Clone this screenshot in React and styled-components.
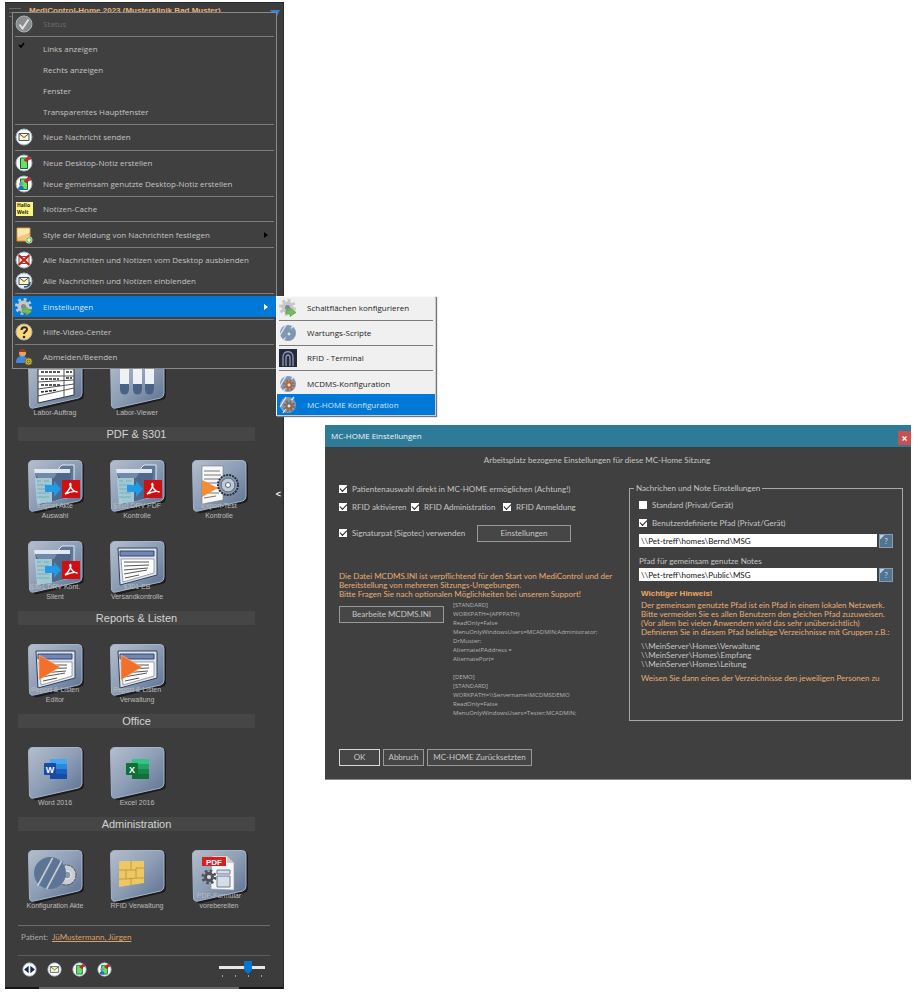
import React from "react";
import styled, { createGlobalStyle, css } from "styled-components";

const menuFont = `"Open Sans", "Noto Sans", sans-serif`;
const winFont = `Lato, "Liberation Sans", sans-serif`;
const arial = `"Liberation Sans", sans-serif`;

const GlobalStyle = createGlobalStyle`
    * { box-sizing: border-box; }
    body { margin: 0; background: #fff; font-family: ${arial}; }
    button, input { font: inherit; margin: 0; padding: 0; }
    ul, p, h1, h2, h3, pre { margin: 0; padding: 0; }
    ul { list-style: none; }
    svg { display: block; flex: none; }
`;

const Desktop = styled.div`
    display: flex;
    align-items: flex-start;
    gap: 41px;
    padding: 2px 7px 8px 5px;
`;

/* ---------- side bar ---------- */

const Sidebar = styled.aside`
    position: relative;
    flex: none;
    width: 279px;
    background: #3c3c3c;
    border-right: 1px solid #2a2a2a;
    border-top: 1px solid #2a2a2a;
`;

const TitleBar = styled.header`
    display: flex;
    align-items: flex-start;
    gap: 8px;
    height: 24px;
    padding: 3px 3px 0 4px;
`;

const Title = styled.h1`
    flex: 1;
    font: bold 8px/10px ${arial};
    color: #e8b27a;
    white-space: nowrap;
`;

const Burger = styled.button`
    width: 12px;
    height: 11px;
    margin-top: 2px;
    border: 0;
    background: repeating-linear-gradient(#666 0 1px, transparent 1px 4px);
`;

const Sections = styled.div`
    display: flex;
    flex-direction: column;
    gap: 9px;
    padding: 0 28px 0 13px;
`;

const FirstRow = styled.div`
    padding-top: 330px;
`;

const Caption = styled.h2`
    height: 14px;
    margin-bottom: 19px;
    background: #464646;
    color: #d4d4d4;
    font: normal 11px/15px ${arial};
    text-align: center;
`;

const TileGrid = styled.div`
    display: grid;
    grid-template-columns: repeat(3, 82px);
    row-gap: 20px;
    margin-left: -4px;
`;

const Tile = styled.button`
    display: flex;
    flex-direction: column;
    align-items: center;
    justify-content: flex-end;
    width: 82px;
    height: 61px;
    border: 0;
    background: none;
    color: #bdbdbd;
    font: 7px/10px ${arial};
`;

const TileArt = styled.span`
    height: 51px;
    margin-left: 4px;
    margin-bottom: ${props => (props.$lines === 2 ? "-10px" : "0")};
`;

const TileLabel = styled.span`
    position: relative;
    white-space: nowrap;
`;

const PatientBar = styled.div`
    display: flex;
    gap: 4px;
    align-items: center;
    height: 31px;
    margin: 14px 13px 0 13px;
    padding: 0 3px 6px;
    border-top: 1px solid #6c6c6c;
    border-bottom: 1px solid #5c5c5c;
    color: #a8a8a8;
    font: 8px/11px ${winFont};

    a { color: #dca268; }
`;

const BottomBar = styled.div`
    display: flex;
    align-items: center;
    gap: 10px;
    height: 31px;
    padding: 0 18px 5px 17px;
`;

const RoundButton = styled.button`
    width: 15px;
    height: 15px;
    border: 0;
    background: none;
`;

const ZoomBox = styled.label`
    display: flex;
    flex-direction: column;
    width: 46px;
    margin-left: auto;
`;

const Range = styled.input`
    appearance: none;
    width: 46px;
    height: 13px;
    background: linear-gradient(#e8e8e8, #e8e8e8) center / 100% 3px no-repeat;

    &::-webkit-slider-thumb {
        appearance: none;
        width: 8px;
        height: 13px;
        background: #0078d7;
        clip-path: polygon(0 0, 100% 0, 100% 70%, 50% 100%, 0 70%);
    }
`;

const Ticks = styled.span`
    display: flex;
    justify-content: space-between;
    padding: 1px 3px 0;

    i { width: 1px; height: 2px; background: #a0a0a0; }
`;

const Grip = styled.div`
    height: 2px;
    border: solid #151515;
    border-width: 0 44px 0 34px;
    background: #666;
`;

const Collapse = styled.button`
    position: absolute;
    top: 485px;
    right: 0;
    width: 9px;
    border: 0;
    background: none;
    color: #f0f0f0;
    font: bold 9px/12px ${arial};
`;

/* ---------- menus ---------- */

const MenuList = styled.ul`
    position: absolute;
    z-index: 2;
    display: flex;
    flex-direction: column;
    font: 8px/12px ${menuFont};

    ${props => props.$sub ? css`
        top: 0;
        left: 263px;
        width: 160px;
        height: 120px;
        background: #f0f0f0;
        border: 1px solid #fafafa;
        border-right-color: #ccc;
        border-bottom-color: #ccc;
        box-shadow: 1px 1px 1px #777;
        color: #1c1c1c;
    ` : css`
        top: 9px;
        left: 7px;
        width: 265px;
        height: 357px;
        background: #404040;
        border: 1px solid #8a8a8a;
        color: #c4c4c4;
    `}
`;

const MenuRow = styled.li`
    position: relative;
    flex: none;
    height: 21px;
`;

const MenuButton = styled.button`
    display: grid;
    grid-template-columns: 18px 1fr 8px;
    column-gap: 10px;
    align-items: center;
    width: 100%;
    height: 21px;
    padding: 0 4px 0 2px;
    border: 0;
    background: ${props => (props.$active ? "#0078d7" : "none")};
    color: ${props => (props.disabled ? "#6c6c6c" : props.$active ? "#d6e6f5" : "inherit")};
    text-align: left;
    white-space: nowrap;
`;

const Divider = styled.li`
    flex: 1;
    display: flex;
    align-items: center;
    padding: 0 2px;

    &::before {
        content: "";
        flex: 1;
        border-top: 1px solid #7c7c7c;
    }
`;

/* ---------- dialog ---------- */

const Dialog = styled.section`
    flex: 1;
    min-width: 0;
    margin-top: 423px;
    background: #404040;
    border-bottom: 1px solid #8a8a8a;
    color: #c6c6c6;
    font: 8px/9px ${winFont};
`;

const DialogBar = styled.header`
    display: flex;
    align-items: center;
    justify-content: space-between;
    height: 22px;
    padding-left: 6px;
    background: #2e7b98;
    color: #f0f6f8;

    h2 { font: normal 8px/12px ${menuFont}; }
`;

const CloseButton = styled.button`
    width: 13px;
    height: 14px;
    margin-top: 4px;
    border: 0;
    background: #c75050;
    color: #fff;
    display: grid;
    place-items: center;
`;

const Intro = styled.p`
    padding: 9px 42px 0 0;
    text-align: center;
`;

const DialogBody = styled.div`
    display: grid;
    grid-template-columns: 274px minmax(0, 1fr);
    column-gap: 16px;
    padding: 15px 8px 0 14px;
`;

const Options = styled.div`
    display: flex;
    flex-direction: column;
`;

const CheckRow = styled.div`
    display: grid;
    grid-template-columns: 72px 92px auto;
    align-items: center;
    height: 18px;
`;

const SignRow = styled(CheckRow)`
    grid-template-columns: 138px auto;
    margin-top: 8px;
`;

const CheckLabel = styled.label`
    display: flex;
    align-items: center;
    gap: 5px;
    white-space: nowrap;
`;

const CheckInput = styled.input`
    appearance: none;
    display: grid;
    place-items: center;
    flex: none;
    width: 8px;
    height: 8px;
    background: #fff;

    &:checked::after {
        content: "";
        width: 6px;
        height: 3px;
        margin-top: -2px;
        border-left: 1px solid #222;
        border-bottom: 1px solid #222;
        transform: rotate(-45deg);
    }
`;

const WinButton = styled.button`
    flex: none;
    height: 17px;
    width: ${props => props.$width};
    border: 1px solid ${props => (props.$default ? "#d8d8d8" : "#999")};
    background: #464646;
    color: #c6c6c6;
    line-height: 15px;
    white-space: nowrap;
`;

const Hint = styled.p`
    color: #e8ae74;
    white-space: nowrap;
`;

const IniHint = styled(Hint)`
    margin-top: 30px;
`;

const IniRow = styled.div`
    display: flex;
    align-items: flex-start;
    gap: 9px;

    button { margin-top: 7px; }
    pre { margin-top: 2px; font: 6px/9px ${menuFont}; color: #b4b4b4; }
`;

const Group = styled.fieldset`
    min-width: 0;
    height: 237px;
    margin: 4px 0 0;
    padding: 3px 9px 0;
    border: 1px solid #a8a8a8;

    legend { padding: 0 2px; margin-left: -5px; }
`;

const PathRow = styled.div`
    display: flex;
    align-items: center;
    gap: 2px;
    height: 15px;
    margin-top: 1px;
`;

const PathInput = styled.input`
    flex: 1;
    min-width: 0;
    height: 13px;
    padding: 0 2px;
    border: 0;
    background: #fff;
    color: #111;
`;

const HelpButton = styled.button`
    width: 14px;
    height: 14px;
    border: 1px solid #7fa0b8;
    background: linear-gradient(135deg, #b9d0de 20%, #52748f 21%);
    color: #c8dbe8;
    line-height: 12px;
`;

const FieldLabel = styled.label`
    display: block;
    margin-top: 9px;
`;

const Notice = styled.div`
    display: flex;
    flex-direction: column;
    gap: 5px;
    padding: 7px 2px 0;

    h3 { color: #f0a860; font: bold 8px/10px ${arial}; margin-bottom: -3px; }
    p { white-space: pre; }
`;

const Footer = styled.footer`
    display: flex;
    gap: 3px;
    padding: 28px 14px 13px;
`;

/* ---------- icons ---------- */

const Disc = ({ fill = "#fff", children }) => (
    <svg width="100%" viewBox="0 0 18 18">
        <circle cx="9" cy="9" r="8" fill={fill} stroke="#9fb4bd" />
        {children}
    </svg>
);

const Status = () => (
    <Disc fill="#8c8c8c"><path d="M4.500 9.500l3 4 6-9" fill="none" stroke="#e0e0e0" strokeWidth="2" /></Disc>
);

const Envelope = () => (
    <>
        <path d="M4 5.500h10v7H4z" fill="#fff6bf" stroke="#455770" />
        <path d="M4 5.500l5 4 5-4" fill="none" stroke="#455770" />
    </>
);

const Mail = () => <Disc><Envelope /></Disc>;

const MailBack = () => (
    <Disc fill="#e9f1f6"><Envelope /><path d="M9 15c4 0 6-2 6-5" fill="none" stroke="#2e4c73" strokeWidth="1.500" /></Disc>
);

const MailOff = () => (
    <Disc><Envelope /><path d="M3.500 4l11 10M14.500 4l-11 10" stroke="#e01515" strokeWidth="2.200" /></Disc>
);

const NoteArt = () => (
    <>
        <path d="M5.500 4h7v10.500h-7z" fill="#65df66" stroke="#1c6b35" />
        <path d="M9 6l3 2 1-2 3-1-3-3-1 2z" fill="#e02020" stroke="#8c1111" strokeWidth=".5" />
    </>
);

const Note = () => <Disc><NoteArt /></Disc>;

const SharedNote = () => (
    <Disc>
        <NoteArt />
        <path d="M3 15c0-3 1-4 3-4s3 1 3 4z" fill="#286fae" />
        <circle cx="6" cy="9" r="2" fill="#5fa0bd" />
    </Disc>
);

const Sticky = () => (
    <svg width="18" height="18" viewBox="0 0 18 18">
        <rect x="1" y="2" width="17" height="14" fill="#fdf47d" />
        <text x="2" y="7" fontSize="5" fontWeight="bold" fill="#222">Hallo</text>
        <text x="2" y="14" fontSize="5" fontWeight="bold" fill="#222">Welt</text>
    </svg>
);

const Style = () => (
    <svg width="18" height="18" viewBox="0 0 18 18">
        <path d="M2 2h13v13H2z" fill="#f5c774" stroke="#d58f3d" />
        <path d="M2.500 2.500h12v4l-12 5z" fill="#fce7ad" />
        <circle cx="14" cy="14" r="3.200" fill="#6db344" stroke="#e8f3df" strokeWidth=".7" />
        <path d="M14 12v4M12 14h4" stroke="#fff" strokeWidth="1.200" />
    </svg>
);

const Gear = ({ color = "#b9bec1", x = 9, y = 9, r = 5, hole = "#59656c" }) => (
    <g transform={`translate(${x} ${y})`}>
        <circle r={r + 1} fill="none" stroke={color} strokeWidth="3" strokeDasharray={`${(r + 1) * 0.4} ${(r + 1) * 0.385}`} />
        <circle r={r} fill={color} />
        <circle r={r * 0.42} fill={hole} />
    </g>
);

const GearGo = () => (
    <svg width="18" height="18" viewBox="0 0 18 18">
        <Gear x={8.5} y={8.5} r={6} color="#c3c8ca" hole="#7d898f" />
        <path d="M7 11.500h4V9l6 4.500-6 4v-2.500H7z" fill="#74bf58" stroke="#4a9440" strokeWidth=".6" />
    </svg>
);

const Slashes = ({ gear = "#7e96ac" }) => (
    <svg width="18" height="18" viewBox="0 0 18 18">
        <circle cx="9" cy="9" r="8" fill="#7f9abb" />
        <path d="M1 11L7 1M4 17L7 12M11 6L15 1" stroke="#e4e9ef" strokeWidth="1.300" />
        <Gear color={gear} x={10} y={10} r={3.5} hole="#e0e4e8" />
    </svg>
);

const Rfid = () => (
    <svg width="18" height="18" viewBox="0 0 18 18">
        <rect width="18" height="18" fill="#262a3d" />
        <path d="M4 17V8c0-7 10-7 10 0v9M7 17V9c0-4 4-4 4 0v8" fill="none" stroke="#9299b5" strokeWidth="1.300" />
    </svg>
);

const Help = () => (
    <Disc fill="#ffd778">
        <path d="M6.500 7c0-4 6-3.500 5.500-.5C11.500 9 9 8.500 9 11" fill="none" stroke="#2b2b2b" strokeWidth="2" />
        <circle cx="9" cy="14" r="1.300" fill="#2b2b2b" />
    </Disc>
);

const Logout = () => (
    <svg width="18" height="18" viewBox="0 0 18 18">
        <path d="M1 15c0-6 3-7 6-7s6 1 6 7z" fill="#3b8ade" />
        <circle cx="7.500" cy="5" r="3.500" fill="#e7a06a" />
        <path d="M4 4c0-4 7-4 7 0z" fill="#8c3d20" />
        <circle cx="13.500" cy="13.500" r="3.500" fill="#d3c04a" stroke="#7a6a18" />
        <circle cx="13.500" cy="13.500" r="1.500" fill="none" stroke="#6a5a10" />
    </svg>
);

const Check = () => (
    <svg width="12" height="18" viewBox="0 0 12 18">
        <path d="M4 5l2 2 3-4" fill="none" stroke="#000" strokeWidth="1.600" />
    </svg>
);

const Arrow = ({ color = "#000" }) => (
    <svg width="4" height="6" viewBox="0 0 4 6"><path d="M0 0l4 3-4 3z" fill={color} /></svg>
);

const ArrowsLR = () => (
    <Disc><path d="M8 4.500v9L2.500 9zM10 4.500v9L15.500 9z" fill="#15294a" /></Disc>
);

/* ---------- tile pictures ---------- */

const FormArt = () => (
    <g>
        <path d="M10 4h36v34l-36 8z" fill="#fff" stroke="#333" />
        <path d="M10 12h36M10 19h36M10 25l36-2M10 32l36-5M10 39l36-8M36 4v36" stroke="#555" fill="none" />
        <path d="M13 15h20M13 22h18M13 28h20M13 35l16-2M38 15h6M38 21h6" stroke="#222" strokeWidth="1.500" strokeDasharray="3 1" />
    </g>
);

const TubesArt = () => (
    <g>
        {[10, 23, 35].map(x => (
            <g key={x}>
                <rect x={x} y="2" width="9" height="35" rx="4.500" fill="#eef2f6" />
                <path d={`M${x} 27h9v6a4.500 4.500 0 0 1-9 0z`} fill="#4a6285" />
            </g>
        ))}
    </g>
);

const ExportArt = () => (
    <g>
        <path d="M31 8l3-3h12v30l-8 3z" fill="#5f7799" stroke="#e4ebf3" />
        <path d="M6 9h36v28l-30 8z" fill="#dfe7f0" />
        <path d="M7 13h36l-2 24-29 8z" fill="#4f6789" />
        <path d="M7 13h22l-3 5H10z" fill="#7289aa" />
        <path d="M7 18h17v24l-15 2z" fill="#a9d3dc" opacity=".9" />
        <path d="M9 21h4M16 21h5M9 25h12M9 29h12M9 33h12M9 37h12" stroke="#7ca8b3" />
        <path d="M17 25h9v-4l7 8-7 8v-5h-9z" fill="#219be8" />
        <rect x="34" y="20" width="18" height="18" fill="#cc1016" />
        <path d="M37 34c4-3 7-9 5.500-10.500-2 0 1 8 7 8.500-3-1.500-8 0-12.500 2z" fill="none" stroke="#fff" strokeWidth="1.400" />
    </g>
);

const TestArt = () => (
    <g>
        <path d="M10 6h21v34l-21 4z" fill="#f8f8f8" stroke="#777" strokeWidth=".6" />
        <path d="M12 11h16M12 15h17M12 19h15M12 23h17M12 28h14M12 33h15M12 38l12-2" stroke="#777" />
        <circle cx="36" cy="25" r="10" fill="#8a99ad" stroke="#25303f" strokeWidth="2" strokeDasharray="2 1" />
        <circle cx="36" cy="25" r="7" fill="#bcc8d6" stroke="#526176" />
        <circle cx="36" cy="25" r="2.500" fill="#fff" stroke="#526176" />
        <path d="M10 20l16 8-16 9z" fill="#f58b32" />
    </g>
);

const WindowArt = ({ play }) => (
    <g>
        <path d="M8 7h39v27l-37 10z" fill="#dce4ee" stroke="#33425a" />
        <path d="M10 10h34v5H10z" fill="#7385b3" stroke="#34466e" />
        <path d="M11 18h33v14l-31 9z" fill="#fff" stroke="#667" strokeWidth=".6" />
        <path d="M14 21h25M14 25l25-1M14 29l24-2M14 33l23-4M15 37l14-3" stroke="#555" />
        {play && <path d="M11 11l21 12-21 13z" fill="#f2702a" stroke="#f7c19f" strokeWidth=".6" />}
    </g>
);

const OfficeArt = ({ letter, dark, mid, light, top }) => (
    <g>
        <rect x="22" y="12" width="17" height="20" rx="1" fill={mid} />
        <path d="M22 12h17v5H22z" fill={top} />
        <path d="M22 17h17v5H22z" fill={light} />
        <path d="M22 27h17v5H22z" fill={dark} />
        <rect x="16" y="16" width="12" height="12" rx="1" fill={dark} />
        <text x="22" y="25.500" textAnchor="middle" fontSize="9" fontWeight="bold" fill="#fff">{letter}</text>
    </g>
);

const ConfigArt = () => (
    <g>
        <circle cx="38" cy="25" r="10" fill="#c9ced4" stroke="#555" strokeDasharray="3 1" />
        <circle cx="39" cy="25" r="4" fill="#8f979f" stroke="#eee" />
        <circle cx="22" cy="23" r="16" fill="#5c7596" />
        <path d="M10 36L25 8M19 39L34 11" stroke="#c4cedb" strokeWidth="2.500" />
        <path d="M11 36L26 8M20 39L35 11" stroke="#3c4c63" strokeWidth=".7" />
    </g>
);

const ChipArt = () => (
    <g>
        <path d="M9 11h25v22l-25 4z" fill="#edc763" />
        <path d="M9 20h7v9H9M34 18h-8v10h8M16 20h10M16 29l10-1M21 11v9M21 29v6" fill="none" stroke="#c29a3e" />
    </g>
);

const PdfArt = () => (
    <g>
        <path d="M20 6h15l7 7v27l-23-1z" fill="#f6f6f6" stroke="#999" strokeWidth=".6" />
        <path d="M35 6v7h7z" fill="#ccc" />
        <rect x="10" y="7" width="24" height="9" fill="#dc1d1d" />
        <text x="22" y="14.500" textAnchor="middle" fontSize="8" fontWeight="bold" fill="#fff">PDF</text>
        <Gear x={17} y={27} r={5} color="#50545a" hole="#d9dde2" />
        <path d="M25 20h13v4H25zM25 26h13v11H25z" fill="#d4dde8" stroke="#6b7d97" />
    </g>
);

const arts = {
    form: <FormArt />,
    tubes: <TubesArt />,
    exp: <ExportArt />,
    test: <TestArt />,
    window: <WindowArt />,
    play: <WindowArt play />,
    word: <OfficeArt letter="W" dark="#174ba6" mid="#1b5fc0" light="#2b88d8" top="#45a8ee" />,
    excel: <OfficeArt letter="X" dark="#107038" mid="#17864a" light="#21a366" top="#33c481" />,
    config: <ConfigArt />,
    chip: <ChipArt />,
    pdf: <PdfArt />,
};

const Plate = ({ art }) => (
    <svg width="58" height="55" viewBox="0 0 58 55">
        <defs>
            <linearGradient id={"plate-" + art} x1="0" y1="0" x2="1" y2="1">
                <stop offset="0" stopColor="#b4becd" />
                <stop offset=".5" stopColor="#8c9db5" />
                <stop offset="1" stopColor="#5a6e8c" />
            </linearGradient>
        </defs>
        <path d="M6 2h46q4 0 4 4v32q0 4-4 5L10 53q-6 1-6-4z" fill="#111" opacity=".75" />
        <path d="M5 .5h45q4 0 4 4V36q0 4-3.500 5L6 51q-4 1-4.500-3L.5 5Q.5.500 5 .5z" fill={`url(#plate-${art})`} stroke="#a5b4ca" />
        {arts[art]}
    </svg>
);

/* ---------- data ---------- */

const settingsMenu = [
    { icon: <GearGo />, text: "Schaltflächen konfigurieren" },
    null,
    { icon: <Slashes />, text: "Wartungs-Scripte" },
    null,
    { icon: <Rfid />, text: "RFID - Terminal" },
    null,
    { icon: <Slashes gear="#b3683d" />, text: "MCDMS-Konfiguration" },
    { icon: <Slashes gear="#8a6a55" />, text: "MC-HOME Konfiguration", active: true },
];

const mainMenu = [
    { icon: <Status />, text: "Status", disabled: true },
    null,
    { icon: <Check />, text: "Links anzeigen" },
    { text: "Rechts anzeigen" },
    { text: "Fenster" },
    { text: "Transparentes Hauptfenster" },
    null,
    { icon: <Mail />, text: "Neue Nachricht senden" },
    null,
    { icon: <Note />, text: "Neue Desktop-Notiz erstellen" },
    { icon: <SharedNote />, text: "Neue gemeinsam genutzte Desktop-Notiz erstellen" },
    null,
    { icon: <Sticky />, text: "Notizen-Cache" },
    null,
    { icon: <Style />, text: "Style der Meldung von Nachrichten festlegen", arrow: "#000" },
    null,
    { icon: <MailOff />, text: "Alle Nachrichten und Notizen vom Desktop ausblenden" },
    { icon: <MailBack />, text: "Alle Nachrichten und Notizen einblenden" },
    null,
    { icon: <GearGo />, text: "Einstellungen", active: true, arrow: "#fff", sub: settingsMenu },
    null,
    { icon: <Help />, text: "Hilfe-Video-Center" },
    null,
    { icon: <Logout />, text: "Abmelden/Beenden" },
];

const sections = [
    {
        title: "PDF & §301",
        tiles: [
            ["exp", "Export Akte", "Auswahl"],
            ["exp", "§310 DRV PDF", "Kontrolle"],
            ["test", "Export-Test", "Kontrolle"],
            ["exp", "§301 DRV Kont.", "Silent"],
            ["window", "§301 EB", "Versandkontrolle"],
        ],
    },
    {
        title: "Reports & Listen",
        tiles: [["play", "Report & Listen", "Editor"], ["play", "Report & Listen", "Verwaltung"]],
    },
    { title: "Office", tiles: [["word", "Word 2016"], ["excel", "Excel 2016"]] },
    {
        title: "Administration",
        tiles: [["config", "Konfiguration Akte"], ["chip", "RFID Verwaltung"], ["pdf", "PDF-Formular", "vorebereiten"]],
    },
];

const iniText = `[STANDARD]
WORKPATH={APPPATH}
ReadOnly=False
MenuOnlyWindowsUsers=MCADMIN;Administrator;
DrMuster;
AlternateIPAddress =
AlternatePort=

[DEMO]
[STANDARD]
WORKPATH=\\\\Servername\\MCDMSDEMO
ReadOnly=False
MenuOnlyWindowsUsers=Tester;MCADMIN;`;

const Menu = ({ items, sub }) => (
    <MenuList $sub={sub}>
        {items.map((item, i) => item === null ? <Divider key={i} role="separator" /> : (
            <MenuRow key={i}>
                <MenuButton type="button" $active={item.active} disabled={item.disabled}>
                    <span>{item.icon}</span>
                    <span>{item.text}</span>
                    {item.arrow && <Arrow color={item.arrow} />}
                </MenuButton>
                {item.sub && <Menu items={item.sub} sub />}
            </MenuRow>
        ))}
    </MenuList>
);

const Tiles = ({ tiles }) => (
    <TileGrid>
        {tiles.map(([art, ...lines], i) => (
            <Tile key={i} type="button">
                <TileArt $lines={lines.length}><Plate art={art} /></TileArt>
                {lines.map(line => <TileLabel key={line}>{line}</TileLabel>)}
            </Tile>
        ))}
    </TileGrid>
);

const CheckBox = ({ label, checked = true }) => (
    <CheckLabel><CheckInput type="checkbox" defaultChecked={checked} />{label}</CheckLabel>
);

const App = function () {
    return (
        <>
            <GlobalStyle />
            <Desktop>
                <Sidebar>
                    <TitleBar>
                        <Burger type="button" aria-label="Menü" />
                        <Title>MediControl-Home 2023 (Musterklinik Bad Muster)</Title>
                        <svg width="10" height="12" viewBox="0 0 10 12"><path d="M0 4h10L6 12z" fill="#2f7fdc" /></svg>
                    </TitleBar>
                    <Menu items={mainMenu} />
                    <Sections>
                        <FirstRow>
                            <Tiles tiles={[["form", "Labor-Auftrag"], ["tubes", "Labor-Viewer"]]} />
                        </FirstRow>
                        {sections.map(s => (
                            <div key={s.title}>
                                <Caption>{s.title}</Caption>
                                <Tiles tiles={s.tiles} />
                            </div>
                        ))}
                    </Sections>
                    <Collapse type="button">&lt;</Collapse>
                    <PatientBar>
                        <span>Patient:</span>
                        <a href="#patient">JüMustermann, Jürgen</a>
                    </PatientBar>
                    <BottomBar>
                        <RoundButton type="button" aria-label="Wechseln"><ArrowsLR /></RoundButton>
                        <RoundButton type="button" aria-label="Nachricht"><Mail /></RoundButton>
                        <RoundButton type="button" aria-label="Notiz"><Note /></RoundButton>
                        <RoundButton type="button" aria-label="Gemeinsame Notiz"><SharedNote /></RoundButton>
                        <ZoomBox>
                            <Range type="range" min="0" max="100" defaultValue="66" aria-label="Zoom" />
                            <Ticks><i /><i /><i /><i /></Ticks>
                        </ZoomBox>
                    </BottomBar>
                    <Grip />
                </Sidebar>

                <Dialog>
                    <DialogBar>
                        <h2>MC-HOME Einstellungen</h2>
                        <CloseButton type="button" aria-label="Schließen">
                            <svg width="5" height="5" viewBox="0 0 5 5"><path d="M.5.500l4 4M4.500.500l-4 4" stroke="#fff" strokeWidth="1.200" /></svg>
                        </CloseButton>
                    </DialogBar>
                    <Intro>Arbeitsplatz bezogene Einstellungen für diese MC-Home Sitzung</Intro>
                    <DialogBody>
                        <Options>
                            <CheckRow>
                                <CheckBox label="Patientenauswahl direkt in MC-HOME ermöglichen (Achtung!)" />
                            </CheckRow>
                            <CheckRow>
                                <CheckBox label="RFID aktivieren" />
                                <CheckBox label="RFID Administration" />
                                <CheckBox label="RFID Anmeldung" />
                            </CheckRow>
                            <SignRow>
                                <CheckBox label="Signaturpat (Sigotec) verwenden" />
                                <WinButton type="button" $width="94px">Einstellungen</WinButton>
                            </SignRow>
                            <IniHint>
                                Die Datei MCDMS.INI ist verpflichtend für den Start von MediControl und der<br />
                                Bereitstellung von mehreren Sitzungs-Umgebungen.<br />
                                Bitte Fragen Sie nach optionalen Möglichkeiten bei unserem Support!
                            </IniHint>
                            <IniRow>
                                <WinButton type="button" $width="105px">Bearbeite MCDMS.INI</WinButton>
                                <pre>{iniText}</pre>
                            </IniRow>
                        </Options>
                        <Group>
                            <legend>Nachrichen und Note Einstellungen</legend>
                            <CheckRow><CheckBox label="Standard (Privat/Gerät)" checked={false} /></CheckRow>
                            <div>
                                <CheckRow><CheckBox label="Benutzerdefinierte Pfad (Privat/Gerät)" /></CheckRow>
                                <PathRow>
                                    <PathInput aria-label="Benutzerdefinierter Pfad" defaultValue={"\\\\Pet-treff\\homes\\Bernd\\MSG"} />
                                    <HelpButton type="button">?</HelpButton>
                                </PathRow>
                            </div>
                            <FieldLabel htmlFor="shared">Pfad für gemeinsam genutze Notes</FieldLabel>
                            <PathRow>
                                <PathInput id="shared" defaultValue={"\\\\Pet-treff\\homes\\Public\\MSG"} />
                                <HelpButton type="button">?</HelpButton>
                            </PathRow>
                            <Notice>
                                <h3>Wichtiger Hinweis!</h3>
                                <Hint>{`Der gemeinsam genutzte Pfad ist ein Pfad in einem lokalen Netzwerk.
Bitte vermeiden Sie es allen Benutzern den gleichen Pfad zuzuweisen.
(Vor allem bei vielen Anwendern wird das sehr unübersichtlich)
Definieren Sie in diesem Pfad beliebige Verzeichnisse mit Gruppen z.B.:`}</Hint>
                                <p>{`\\\\MeinServer\\Homes\\Verwaltung
\\\\MeinServer\\Homes\\Empfang
\\\\MeinServer\\Homes\\Leitung`}</p>
                                <Hint>Weisen Sie dann eines der Verzeichnisse den jeweiligen Personen zu</Hint>
                            </Notice>
                        </Group>
                    </DialogBody>
                    <Footer>
                        <WinButton type="button" $width="41px" $default>OK</WinButton>
                        <WinButton type="button" $width="41px">Abbruch</WinButton>
                        <WinButton type="button" $width="105px">MC-HOME Zurücksetzten</WinButton>
                    </Footer>
                </Dialog>
            </Desktop>
        </>
    );
};

export default App;
